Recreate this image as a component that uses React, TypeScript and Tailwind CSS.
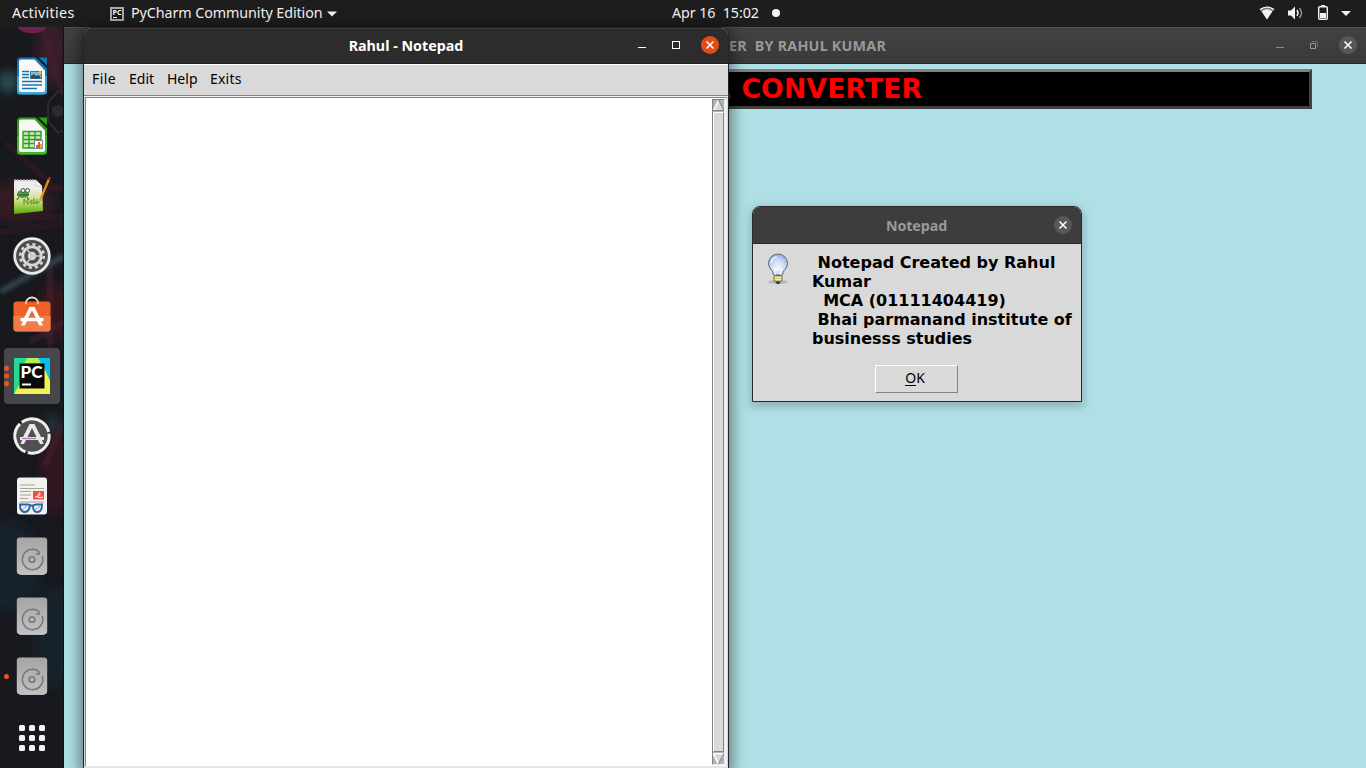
import React from "react";

const OfficeDoc = ({ calc = false }: { calc?: boolean }) => {
  const c = calc ? "#2f9e18" : "#1875ab";
  const l = calc ? "#43b52a" : "#3da5d9";
  return (
    <svg width="32" height="38" viewBox="0 0 32 38">
      <rect x="1" y="0.500" width="30" height="37" rx="3.500" fill={c} />
      <path d="M1 19H31V34a3.500 3.500 0 0 1-3.500 3.500H4.500A3.500 3.500 0 0 1 1 34Z" fill={l} />
      <path d="M19.500 0H31V11.500Z" fill="#151a20" />
      <path d="M22.500 .5H31V8.500Z" fill={c} />
      <path d="M5 2.500H18.500L29 13.500V33q0 2-2 2H5q-2 0-2-2V4.500q0-2 2-2Z" fill="#f8f8f8" />
      {calc ? (
        <>
          <path d="M7 14.500H25V31H7ZM7 18.500H25M7 22.500H25M7 26.500H25M13 14V31M19 14V31" fill="#c9ebc0" stroke={c} strokeWidth="1.400" />
          <rect x="18.500" y="23.500" width="8" height="8" fill="#fff" stroke="#888" />
          <path d="M20 28h2v3h-2Z" fill="#3992ce" />
          <path d="M22 25h2v6h-2Z" fill="#df5b1e" />
          <path d="M24 27h2v4h-2Z" fill="#edaa35" />
        </>
      ) : (
        <>
          <path d="M6 14.500H13M6 17.500H13M6 20.500H13M6 24.500H26M6 28H26M6 31.500H21" stroke={c} strokeWidth="1.300" />
          <rect x="14.500" y="14.500" width="11" height="7" fill="#77bce5" stroke="#377aa2" />
          <path d="M15 21.500V19l3-2 2 2 3-1 2 3.500Z" fill="#444" />
          <circle cx="24" cy="15.500" r="1.500" fill="#ffc500" />
        </>
      )}
    </svg>
  );
};

const Notepadqq = () => (
  <svg width="40" height="42" viewBox="0 0 40 42">
    <defs>
      <linearGradient id="grass" x1="0" y1="0" x2="0" y2="1">
        <stop offset=".25" stopColor="#eee" />
        <stop offset=".65" stopColor="#bede6d" />
        <stop offset="1" stopColor="#55a80c" />
      </linearGradient>
    </defs>
    <path d="M2 5H24L30 11 31 36 2 39Z" fill="url(#grass)" />
    <path d="M2 5.500H24" stroke="#ccc" strokeWidth="2" strokeDasharray="2 1" />
    <path d="M24 5v6h6Z" fill="#fafafa" stroke="#aaa" strokeWidth=".5" />
    <ellipse cx="11" cy="19" rx="6" ry="4" fill="#579b4a" />
    <circle cx="11" cy="15.500" r="2" fill="#eee" stroke="#355d31" />
    <circle cx="15.500" cy="15.500" r="2" fill="#eee" stroke="#355d31" />
    <path d="M5 20h12M7 22l-2 3M15 22l2 3" stroke="#304b30" fill="none" />
    <path d="M12 30V24l4 5v-6M18 27q2-4 2 0t-2 0M22 23v6q2-4 3 0v-5M26 28l3-3" fill="none" stroke="#57852f" strokeWidth="1" />
    <path d="M28 25.500 37 4" stroke="#e39a16" strokeWidth="2.200" />
    <path d="M37 5l1-3" stroke="#a33" strokeWidth="2" />
  </svg>
);

const Settings = () => (
  <svg width="40" height="40" viewBox="0 0 40 40">
    <circle cx="20" cy="20" r="17.300" fill="#4d4d4d" stroke="#e8e8e8" strokeWidth="2.800" />
    <circle cx="20" cy="20" r="11.800" fill="none" stroke="#d8d8d8" strokeWidth="2.600" strokeDasharray="3.100 3.080" />
    <circle cx="20" cy="20" r="9.200" fill="none" stroke="#d8d8d8" strokeWidth="2.800" />
    <circle cx="20" cy="20" r="4.200" fill="#d8d8d8" />
    <path d="M20 20h9M20 20l-5-7M20 20l-5 7" stroke="#c8c8c8" strokeWidth="1.500" />
  </svg>
);

const Software = () => (
  <svg className="relative -top-px" width="40" height="40" viewBox="0 0 40 40">
    <path d="M14 11V8a6 5.500 0 0 1 12 0v3" fill="none" stroke="#eee0c3" strokeWidth="1.800" />
    <rect x="1.500" y="6.500" width="37" height="30" rx="3" fill="#f06129" />
    <path d="M1.500 21H38.500V33.500a3 3 0 0 1-3 3H4.500a3 3 0 0 1-3-3Z" fill="#f47a48" />
    <path d="M14 6.500V9M26 6.500V9" stroke="#eee0c3" strokeWidth="1.500" />
    <path d="M17.500 12h5l5.500 11h3.500v3.300h-2.500l2 4.200h-3.800l-2-4.200h-10.400l-2 4.200H9l2-4.200H8.500V23H12ZM20 15.500l-4 7.500h8Z" fill="#fff" fillRule="evenodd" />
  </svg>
);

const PyCharm = () => (
  <svg width="36" height="36" viewBox="0 0 36 36">
    <rect width="36" height="36" fill="#2ed889" />
    <path d="M22 0h14v23H22Z" fill="#09bdea" />
    <path d="M13 0h11l3 5H10Z" fill="#b7ec53" />
    <path d="M0 36 6 26 28 5l8 18v13Z" fill="#f3f252" />
    <path d="M0 0h13L0 24Z" fill="#25d991" />
    <rect x="5.500" y="5.500" width="25" height="25" fill="#090909" />
    <text x="6.500" y="20" textLength="22" lengthAdjust="spacingAndGlyphs" fontFamily="Lato" fontWeight="900" fontSize="16.500" fill="#fff">PC</text>
    <path d="M8 26.500h9" stroke="#fff" strokeWidth="2" />
  </svg>
);

const Updater = () => (
  <svg width="40" height="40" viewBox="0 0 40 40">
    <circle cx="20" cy="20" r="17" fill="#505050" />
    <circle cx="20" cy="20" r="17.200" fill="none" stroke="#eee" strokeWidth="3" strokeDasharray="33.500 2.500" transform="rotate(-8 20 20)" />
    <path d="M17.500 8h5l6.500 13h3v3h-2l1.500 4h-3.500l-2-4H14l-2 4H8.500l1.500-4H8v-3h3ZM20 12l-4.500 9h9Z" fill="#e8e8e8" fillRule="evenodd" />
    <path d="M10 22.500h14" stroke="#b77ac0" strokeWidth="1.300" />
  </svg>
);

const Reader = () => (
  <svg width="32" height="38" viewBox="0 0 32 38">
    <rect x="1" y=".5" width="30" height="37" rx="3" fill="#f1f1f1" />
    <path d="M4 8h15M4 11.500h24M4 14.500h11M4 18h11M4 21.500h8M4 25h24" stroke="#aaa58e" strokeWidth="1.200" />
    <rect x="17" y="14" width="11" height="8.500" fill="#f44c40" />
    <path d="M19 20q5 0 5-3t-2 1 5 2" stroke="#fff" fill="none" />
    <path d="M3 27.500h9l3 1h2l3-1h7M4 28q0 7 5 7 4 0 5-6.500M17 28.500q0 6.500 4 6.500 5 0 5-7" stroke="#2766ad" strokeWidth="1.900" fill="none" />
    <path d="M6 33l5-4M19 33l5-4" stroke="#999" />
  </svg>
);

const Drive = () => (
  <svg width="32" height="38" viewBox="0 0 32 38">
    <defs>
      <linearGradient id="drive" x1="0" y1="0" x2="0" y2="1">
        <stop stopColor="#a5a5a5" />
        <stop offset="1" stopColor="#c1c1c1" />
      </linearGradient>
    </defs>
    <rect x=".8" y=".5" width="30.400" height="36.800" rx="3.300" fill="url(#drive)" />
    <path d="M3.500 37.300h25" stroke="#d4d4d4" />
    <path d="M23 14.500A10.200 10.200 0 1 0 26.200 19M23 14.500v2.500h-3" fill="none" stroke="#757575" strokeWidth="1.500" />
    <circle cx="16" cy="22.500" r="2.800" fill="none" stroke="#757575" strokeWidth="1.500" />
  </svg>
);

const icons: React.ReactNode[] = [
  <OfficeDoc />,
  <OfficeDoc calc />,
  <Notepadqq />,
  <Settings />,
  <Software />,
  <PyCharm />,
  <Updater />,
  <Reader />,
  <Drive />,
  <Drive />,
  <Drive />,
];

const Dock = () => (
  <aside className="relative flex w-16 shrink-0 flex-col overflow-hidden bg-[#17191f] pt-[19px]">
    <svg className="absolute inset-0" width="64" height="741">
      <defs>
        <filter id="soft" x="-1" y="-1" width="3" height="3"><feGaussianBlur stdDeviation="6" /></filter>
        <filter id="line"><feGaussianBlur stdDeviation="2" /></filter>
      </defs>
      <g filter="url(#soft)">
        <ellipse cx="52" cy="25" rx="15" ry="35" fill="#3a1d2b" />
        <circle cx="8" cy="55" r="10" fill="#2d565d" />
        <ellipse cx="20" cy="175" rx="35" ry="20" fill="#311a23" />
        <ellipse cx="55" cy="285" rx="18" ry="28" fill="#35151c" />
        <ellipse cx="55" cy="445" rx="14" ry="45" fill="#301821" />
        <ellipse cx="10" cy="540" rx="30" ry="45" fill="#14222c" />
        <ellipse cx="55" cy="610" rx="20" ry="50" fill="#16232c" />
        <circle cx="52" cy="396" r="6" fill="#24494d" />
      </g>
      <g filter="url(#line)" fill="none">
        <path d="M0 265 64 229" stroke="#37494f" strokeWidth="5" />
        <path d="M0 170l64-10M0 188l64 2M0 205l64-8M5 115l55 50" stroke="#3b1a23" strokeWidth="3" />
        <path d="M42 0l22 70M30 315l34-20M50 240v80M64 395l-20 45" stroke="#42202b" strokeWidth="4" />
      </g>
      <path d="M64 66l-6-2-10 12v18l10 12 6-3" stroke="#2a2c31" strokeWidth="2" fill="none" />
      <circle cx="58" cy="84" r="6" fill="#2b2c31" />
      <ellipse cx="32" cy="-2" rx="15" ry="8.500" fill="#6b2148" />
      <path d="M63.500 0V741" stroke="#111" />
    </svg>
    {icons.map((icon, i) => (
      <div key={i} className="relative flex h-[60px] shrink-0 items-center justify-center">
        {i === 5 && <div className="absolute left-1 top-[2px] h-14 w-14 rounded-[4px] bg-white/20" />}
        {i === 5 && (
          <svg className="absolute left-[4px] top-[19px]" width="6" height="22">
            <g fill="#e95420"><circle cx="2.500" cy="3.300" r="2.600" /><circle cx="2.500" cy="11" r="2.600" /><circle cx="2.500" cy="18.600" r="2.600" /></g>
          </svg>
        )}
        {i === 10 && <span className="absolute left-1 top-[27.500px] h-[5px] w-[5px] rounded-full bg-[#e95420]" />}
        <div className="relative">{icon}</div>
      </div>
    ))}
    <div className="relative mx-auto mt-[19px] grid grid-cols-3 gap-x-1 gap-y-1">
      {Array.from({ length: 9 }, (_, i) => <span key={i} className="h-[6px] w-[6px] rounded-[1.500px] bg-[#f2f2f2]" />)}
    </div>
  </aside>
);

const Cross = () => (
  <svg width="18" height="18" viewBox="0 0 18 18"><path d="M5.500 5.500l7 7M12.500 5.500l-7 7" stroke="#fff" strokeWidth="1.500" /></svg>
);

const TopBar = () => (
  <header className="relative flex h-[27px] shrink-0 items-center bg-[#1d1d1d] text-[14.300px] text-[#f2f2f2]">
    <span className="-mt-px ml-3 w-[98px] whitespace-pre tracking-[0.300px]">Activities</span>
    <svg width="14" height="14" viewBox="0 0 14 14">
      <rect width="14" height="14" fill="#aaa" />
      <rect x="2" y="2" width="10" height="10" fill="#191919" />
      <text x="2.500" y="7.800" fontSize="6.500" fontWeight="700" fill="#fff" textLength="9" lengthAdjust="spacingAndGlyphs">PC</text>
      <path d="M3 10.500h4" stroke="#fff" />
    </svg>
    <span className="-mt-px ml-[7px] w-[192px] whitespace-pre tracking-[-0.080px]">PyCharm Community Edition</span>
    <svg className="ml-[4px]" width="10" height="6"><path d="M0 .5h10L5 5.500Z" fill="#f2f2f2" /></svg>
    <span className="absolute left-[672px] top-[3px] whitespace-pre leading-[20px] tracking-[-0.080px]">Apr 16  15:02</span>
    <span className="absolute left-[772px] top-[9px] h-2 w-2 rounded-full bg-[#f2f2f2]" />
    <svg className="absolute left-[1259px] top-[4px]" width="100" height="19" viewBox="0 0 100 19">
      <path d="M.8 5.200Q8 .500 15.200 5.200L8 15.500Z" fill="#777" />
      <path d="M2.600 7.200Q8 3.500 13.400 7.200L8 15.500Z" fill="#f2f2f2" />
      <path d="M1 5.600Q8 .8 15 5.600" fill="none" stroke="#f2f2f2" strokeWidth="1.300" />
      <path d="M29 6.500h3l4-4v13l-4-4h-3Z" fill="#f2f2f2" />
      <path d="M38 6q2 3 0 6" fill="none" stroke="#f2f2f2" strokeWidth="1.400" />
      <path d="M40.500 4q4 5 0 10" fill="none" stroke="#999" strokeWidth="1.300" />
      <path d="M62 1h4v2h-4Z" fill="#f2f2f2" />
      <rect x="59.700" y="2.700" width="8.600" height="12.600" rx="1" fill="none" stroke="#f2f2f2" strokeWidth="1.400" />
      <rect x="61" y="9" width="6" height="5" fill="#f2f2f2" />
      <path d="M82 7h10l-5 5Z" fill="#f2f2f2" />
    </svg>
  </header>
);

const ConverterWindow = () => (
  <section className="flex min-w-0 flex-1 flex-col bg-[#b0e0e6]">
    <div className="relative flex h-[37px] shrink-0 items-center border-b border-[#272727] border-t border-t-[#505050] bg-linear-to-b from-[#424242] to-[#3a3a3a] pl-[665px] text-[14.300px] font-bold text-[#999]">
      <span className="whitespace-pre tracking-[0.240px]">ER  BY RAHUL KUMAR</span>
      <svg className="absolute left-[1211px] top-[11px]" width="44" height="12">
        <path d="M1 8.500h8" stroke="#888" />
        <path d="M35.500 4.500h5v5h-5Z" stroke="#999" fill="none" />
        <path d="M37 2.500h5.500V8" stroke="#6c6c6c" fill="none" />
      </svg>
      <span className="absolute left-[1275px] top-[8px] rounded-full bg-[#585858]"><Cross /></span>
    </div>
    <div className="ml-[54px] mt-[5px] flex h-10 w-[1194px] items-center border-[3px] border-b-[#404040] border-l-[#808080] border-r-[#404040] border-t-[#808080] bg-black pl-[589px] font-['DejaVu_Sans'] text-[26.700px] font-bold leading-[34px] text-[red]">
      <span className="whitespace-pre tracking-[0.120px] [word-spacing:1.200px]">A CONVERTER</span>
    </div>
  </section>
);

const NotepadWindow = () => (
  <section className="absolute left-[83px] top-[27px] flex h-[741px] w-[646px] flex-col rounded-t-[8px] border border-b-0 border-[#1c292b] bg-[#d9d9d9] shadow-[0_3px_14px_4px_rgba(0,0,0,0.42)]">
    <div className="relative flex h-[36px] shrink-0 items-center justify-center rounded-t-[7px] border-b border-[#202020] border-t border-t-[#3a3a3a] bg-[#2c2c2c] text-[14.300px] font-bold text-white">
      <span className="whitespace-pre">Rahul - Notepad</span>
      <svg className="absolute left-[553px] top-[10px]" width="46" height="14">
        <path d="M1 8.500h8" stroke="#fff" />
        <rect x="35.500" y="2.500" width="7" height="7" fill="none" stroke="#fff" />
      </svg>
      <span className="absolute left-[617px] top-[7px] rounded-full bg-[#e34c16]"><Cross /></span>
    </div>
    <nav className="flex h-8 shrink-0 items-center gap-[13px] border-b border-t border-b-[#828282] border-t-white pb-[3px] pl-2 text-[14px] text-black">
      <span className="w-6 tracking-[0.400px]">File</span>
      <span className="w-[25px]">Edit</span>
      <span className="w-[30px]">Help</span>
      <span className="tracking-[0.200px]">Exits</span>
    </nav>
    <div className="flex flex-1 border-t border-t-[#f0f0f0] pl-px">
      <div className="flex flex-1 border-l border-t border-[#828282] bg-white">
        <div className="flex-1" />
        <div className="mb-px mt-px flex w-[13px] flex-col items-center border border-[#828282] border-b-[#eee] border-r-[#eee] bg-[#b3b3b3]">
          <svg width="11" height="11"><path d="M0 11 5.500 0 11 11Z" fill="#d9d9d9" /><path d="M.5 11 5.500 0" stroke="#fff" strokeWidth="1.500" /><path d="M5.500 0 11 10.500H0" fill="none" stroke="#828282" /></svg>
          <div className="mt-px w-[11px] flex-1 border border-b-[#828282] border-l-white border-r-[#828282] border-t-white bg-[#d9d9d9]" />
          <svg className="mt-px" width="11" height="11"><path d="M0 0H11L5.500 11Z" fill="#d9d9d9" /><path d="M5.500 11 0 .5H11" fill="none" stroke="#fff" strokeWidth="1.500" /><path d="M11 0 5.500 11" stroke="#828282" /></svg>
        </div>
        <div className="w-[2px] bg-[#f0f0f0]" />
      </div>
      <div className="w-px bg-[#d9d9d9]" />
    </div>
    <div className="h-[2px] shrink-0 bg-[#e4e4e4]" />
  </section>
);

const Bulb = () => (
  <svg width="24" height="32" viewBox="0 0 24 32">
    <defs>
      <radialGradient id="bulb" cx=".5" cy=".65" r=".65">
        <stop stopColor="#f3f5f9" /><stop offset=".6" stopColor="#c9d7ef" /><stop offset="1" stopColor="#86a8e0" />
      </radialGradient>
    </defs>
    <ellipse cx="12" cy="29" rx="10" ry="2" fill="#aaa" opacity=".7" />
    <path d="M7.500 22C7.500 17 2.500 16 2.500 10.500a9.500 9.500 0 0 1 19 0C21.500 16 16.500 17 16.500 22Z" fill="url(#bulb)" stroke="#606779" />
    <path d="M9.500 22 8 15l3 2 1-2 1 2 3-2-1.500 7" fill="none" stroke="#fff" />
    <path d="M5 10q1-5.500 6-6" fill="none" stroke="#eef4ff" strokeWidth="1.500" />
    <rect x="8" y="22.500" width="8" height="6" rx="1.500" fill="#c9c678" stroke="#666438" />
    <path d="M8.500 24.500h7M8.500 26.500h7" stroke="#f1efb5" />
    <path d="M9.500 29h5l-1.500 2h-2Z" fill="#333" />
  </svg>
);

const MessageDialog = () => (
  <section className="absolute left-[752px] top-[206px] flex h-[196px] w-[330px] flex-col rounded-t-[8px] border border-[#292929] bg-[#d9d9d9] shadow-[0_3px_10px_2px_rgba(0,0,0,0.2)]">
    <div className="relative flex h-[37px] shrink-0 items-center justify-center rounded-t-[7px] border-b border-[#292929] bg-[#3d3d3d] text-[14.300px] font-bold text-[#999]">
      <span className="pr-px pt-px tracking-[-0.100px]">Notepad</span>
      <span className="absolute left-[301px] top-[9px] rounded-full bg-[#585858]"><Cross /></span>
    </div>
    <div className="flex pl-[13px] pt-[9px]">
      <Bulb />
      <p className="ml-[22px] whitespace-pre font-['DejaVu_Sans'] text-[16px] font-bold leading-[19px] text-black">{" Notepad Created by Rahul\nKumar\n  MCA (01111404419)\n Bhai parmanand institute of\nbusinesss studies"}</p>
    </div>
    <button className="ml-[122px] mt-[17px] flex h-[28px] w-[83px] items-center justify-center border border-b-[#828282] border-l-white border-r-[#828282] border-t-white pb-[2px] pr-[3px] text-[14px] text-black">
      <span className="border-b border-black leading-[14px]">O</span><span className="border-b border-transparent leading-[14px]">K</span>
    </button>
  </section>
);

export default function App() {
  return (
    <main className="relative flex h-[768px] w-[1366px] flex-col overflow-hidden font-['Noto_Sans',sans-serif]">
      <TopBar />
      <div className="flex min-h-0 flex-1">
        <Dock />
        <ConverterWindow />
      </div>
      <NotepadWindow />
      <MessageDialog />
    </main>
  );
}
